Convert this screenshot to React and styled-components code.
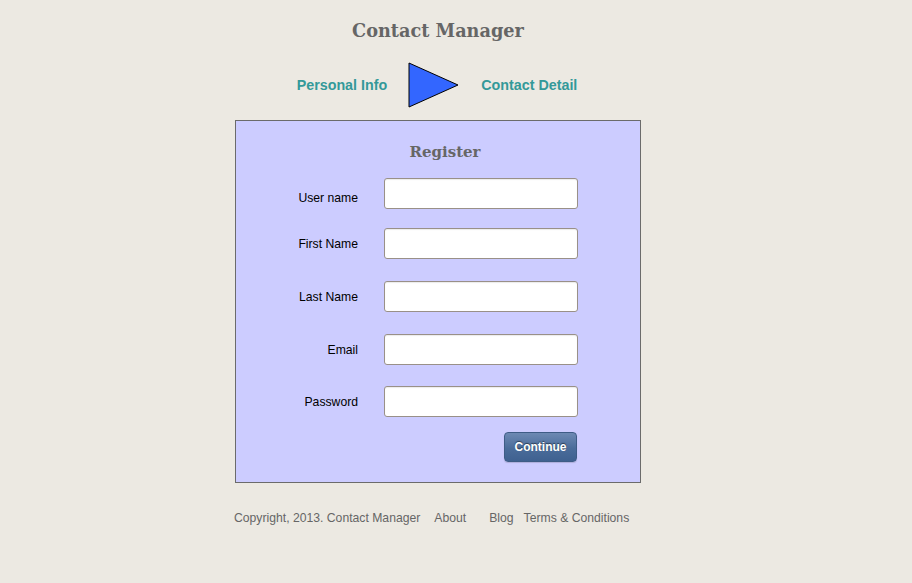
import React from "react";
import styled, { createGlobalStyle } from "styled-components";

const GlobalStyle = createGlobalStyle`
    html, body {
        margin: 0;
        padding: 0;
        background: #ece9e2;
    }
    body {
        font-family: "Liberation Sans", Arial, sans-serif;
    }
`;

const Page = styled.div`
    width: 876px;
    display: flex;
    flex-direction: column;
    align-items: center;
    padding-top: 20px;
`;

const Title = styled.h1`
    margin: 0;
    font-family: "DejaVu Serif", "Liberation Serif", serif;
    font-size: 17.7px;
    font-weight: bold;
    color: #666;
    line-height: 22px;
`;

const Steps = styled.div`
    display: flex;
    align-items: center;
    gap: 21px;
    margin-top: 20px;
    height: 46px;
    padding-right: 2px;
`;

const Step = styled.span`
    font-size: 14.3px;
    font-weight: bold;
    color: #339999;
`;

const FormBox = styled.form`
    box-sizing: border-box;
    width: 406px;
    margin-top: 12px;
    background: #ccccff;
    border: 1px solid #6b6b6b;
    padding: 21px 62px 20px 0;
    display: flex;
    flex-direction: column;
`;

const Heading = styled.h2`
    margin: 0 0 16px 0;
    padding-left: 76px;
    text-align: center;
    font-family: "DejaVu Serif", "Liberation Serif", serif;
    font-size: 15px;
    font-weight: bold;
    color: #666;
    line-height: 20px;
`;

const Row = styled.div`
    display: grid;
    grid-template-columns: 122px 194px;
    column-gap: 26px;
    align-items: center;
    margin-top: ${props => props.$gap || 0}px;
`;

const Label = styled.label`
    text-align: right;
    font-size: 12.2px;
    color: #000;
    padding-top: ${props => props.$shift || 0}px;
`;

const Input = styled.input`
    box-sizing: border-box;
    width: 194px;
    height: 31px;
    border: 1px solid #999088;
    border-radius: 3px;
    background: #fff;
    box-shadow: inset 0 1px 1px rgba(0, 0, 0, 0.08);
`;

const Actions = styled.div`
    display: flex;
    justify-content: flex-end;
    margin-top: 15px;
    padding-right: 1px;
`;

const Button = styled.button`
    box-sizing: border-box;
    width: 73px;
    height: 30px;
    border: 1px solid #3e5c86;
    border-radius: 4px;
    background: linear-gradient(#6d89b3, #4a6c9a 55%, #3f6190);
    color: #fff;
    font-family: "Liberation Sans", Arial, sans-serif;
    font-size: 12px;
    font-weight: bold;
    text-shadow: 0 -1px 1px rgba(0, 0, 0, 0.5);
    box-shadow: 0 1px 1px rgba(0, 0, 0, 0.15);
`;

const Footer = styled.footer`
    width: 406px;
    display: flex;
    margin-top: 28px;
    font-size: 12.2px;
    color: #666;
`;

const FooterItem = styled.span`
    margin-left: ${props => props.$gap || 0}px;
    white-space: nowrap;
`;

const Arrow = () => (
    <svg width="52" height="46" viewBox="0 0 52 46">
        <polygon points="1,1 1,45 50,23" fill="#3366ff" stroke="#000" strokeWidth="1" />
    </svg>
);

const fields = [
    { label: "User name", gap: 0, shift: 8 },
    { label: "First Name", gap: 19, shift: 0 },
    { label: "Last Name", gap: 22, shift: 0 },
    { label: "Email", gap: 22, shift: 0, type: "email" },
    { label: "Password", gap: 21, shift: 0, type: "password" },
];

export default function App() {
    return (
        <Page>
            <GlobalStyle />
            <Title>Contact Manager</Title>
            <Steps>
                <Step>Personal Info</Step>
                <Arrow />
                <Step>Contact Detail</Step>
            </Steps>
            <FormBox onSubmit={e => e.preventDefault()}>
                <Heading>Register</Heading>
                {fields.map(f => (
                    <Row key={f.label} $gap={f.gap}>
                        <Label $shift={f.shift}>{f.label}</Label>
                        <Input type={f.type || "text"} />
                    </Row>
                ))}
                <Actions>
                    <Button type="submit">Continue</Button>
                </Actions>
            </FormBox>
            <Footer>
                <FooterItem $gap={-1}>Copyright, 2013. Contact Manager</FooterItem>
                <FooterItem $gap={14}>About</FooterItem>
                <FooterItem $gap={23}>Blog</FooterItem>
                <FooterItem $gap={10}>Terms &amp; Conditions</FooterItem>
            </Footer>
        </Page>
    );
}
